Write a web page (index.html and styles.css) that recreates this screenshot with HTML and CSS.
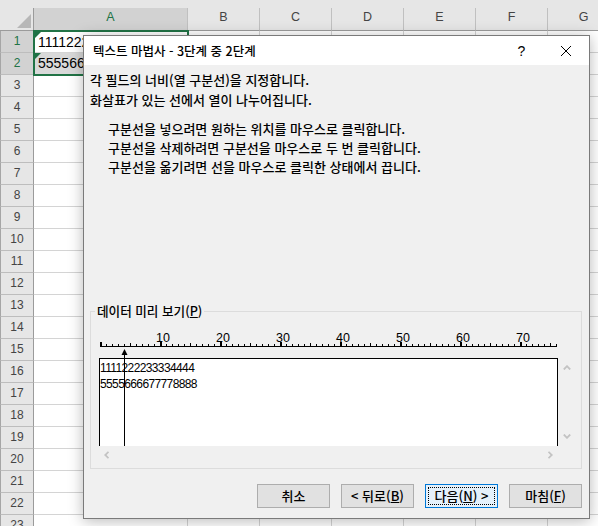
FILE: index.html
```html
<!DOCTYPE html>
<html lang="ko">
<head>
<meta charset="utf-8">
<title>텍스트 마법사</title>
<link rel="stylesheet" href="styles.css">
</head>
<body>
<div class="sheet">
  <div class="topstrip"></div>
  <div class="sheet-grid">
    <div class="corner"><span class="corner-tri"></span></div>
    <div class="colheads">
      <div class="colhead colhead-a selected">A</div>
      <div class="colhead">B</div>
      <div class="colhead">C</div>
      <div class="colhead">D</div>
      <div class="colhead">E</div>
      <div class="colhead">F</div>
      <div class="colhead">G</div>
    </div>
    <div class="rowheads">
      <div class="rowhead selected">1</div>
      <div class="rowhead selected">2</div>
      <div class="rowhead">3</div>
      <div class="rowhead">4</div>
      <div class="rowhead">5</div>
      <div class="rowhead">6</div>
      <div class="rowhead">7</div>
      <div class="rowhead">8</div>
      <div class="rowhead">9</div>
      <div class="rowhead">10</div>
      <div class="rowhead">11</div>
      <div class="rowhead">12</div>
      <div class="rowhead">13</div>
      <div class="rowhead">14</div>
      <div class="rowhead">15</div>
      <div class="rowhead">16</div>
      <div class="rowhead">17</div>
      <div class="rowhead">18</div>
      <div class="rowhead">19</div>
      <div class="rowhead">20</div>
      <div class="rowhead">21</div>
      <div class="rowhead">22</div>
      <div class="rowhead">23</div>
    </div>
    <div class="cells">
      <div class="col col-a">
        <div class="selection">
          <div class="cell cell-active"><span class="err"></span>1111222233334444</div>
          <div class="cell cell-range"><span class="err"></span>5555666677778888</div>
        </div>
      </div>
      <div class="col"></div>
      <div class="col"></div>
      <div class="col"></div>
      <div class="col"></div>
      <div class="col"></div>
      <div class="col"></div>
    </div>
  </div>
</div>

<div class="dialog">
  <div class="titlebar">
    <span class="title">텍스트 마법사 - 3단계 중 2단계</span>
    <span class="tb-btn tb-help">?</span>
    <span class="tb-btn tb-close">
      <svg width="10" height="10" viewBox="0 0 10 10"><path d="M0 0L10 10M10 0L0 10" stroke="#000" stroke-width="1" fill="none"/></svg>
    </span>
  </div>
  <div class="dlg-body">
    <p class="intro">각 필드의 너비(열 구분선)을 지정합니다.<br>화살표가 있는 선에서 열이 나누어집니다.</p>
    <p class="hints">구분선을 넣으려면 원하는 위치를 마우스로 클릭합니다.<br>구분선을 삭제하려면 구분선을 마우스로 두 번 클릭합니다.<br>구분선을 옮기려면 선을 마우스로 클릭한 상태에서 끕니다.</p>
    <fieldset class="preview-group">
      <legend>데이터 미리 보기(<u>P</u>)</legend>
      <svg class="ruler" width="476" height="28" viewBox="0 0 476 28">
        <defs>
          <pattern id="minor" x="1" y="0" width="6" height="28" patternUnits="userSpaceOnUse">
            <rect x="0" y="14" width="1" height="2" fill="#000"/>
          </pattern>
        </defs>
        <rect x="1" y="14" width="457" height="2" fill="url(#minor)"/>
        <rect x="1" y="16" width="457" height="1" fill="#000"/>
        <g fill="#000">
          <rect x="1" y="12" width="2" height="5"/>
          <rect x="61" y="12" width="2" height="5"/>
          <rect x="121" y="12" width="2" height="5"/>
          <rect x="181" y="12" width="2" height="5"/>
          <rect x="241" y="12" width="2" height="5"/>
          <rect x="301" y="12" width="2" height="5"/>
          <rect x="361" y="12" width="2" height="5"/>
          <rect x="421" y="12" width="2" height="5"/>
          <rect x="31" y="13" width="1" height="4"/>
          <rect x="91" y="13" width="1" height="4"/>
          <rect x="151" y="13" width="1" height="4"/>
          <rect x="211" y="13" width="1" height="4"/>
          <rect x="271" y="13" width="1" height="4"/>
          <rect x="331" y="13" width="1" height="4"/>
          <rect x="391" y="13" width="1" height="4"/>
          <rect x="451" y="13" width="1" height="4"/>
        </g>
        <g class="ruler-nums" font-family="Liberation Sans, Arial, sans-serif" font-size="12.5" fill="#000">
          <text x="57" y="12">10</text>
          <text x="117" y="12">20</text>
          <text x="177" y="12">30</text>
          <text x="237" y="12">40</text>
          <text x="297" y="12">50</text>
          <text x="357" y="12">60</text>
          <text x="417" y="12">70</text>
        </g>
        <polygon points="25.5,19 22.5,25 28.5,25" fill="#000"/>
        <rect x="25" y="24" width="1" height="4" fill="#000"/>
      </svg>
      <div class="pv-row">
        <div class="pv-box">
          <div class="pv-text">1111222233334444<br>5555666677778888</div>
          <span class="break-line"></span>
        </div>
        <div class="vscroll">
          <svg width="8" height="5" viewBox="0 0 8 5"><polyline points="0.8,4.5 4,1.2 7.2,4.5" fill="none" stroke="#c3c3c3" stroke-width="1.8"/></svg>
          <svg width="8" height="5" viewBox="0 0 8 5"><polyline points="0.8,0.5 4,3.8 7.2,0.5" fill="none" stroke="#c3c3c3" stroke-width="1.8"/></svg>
        </div>
      </div>
      <div class="hscroll">
        <svg width="5" height="8" viewBox="0 0 5 8"><polyline points="4.5,0.8 1.2,4 4.5,7.2" fill="none" stroke="#c3c3c3" stroke-width="1.8"/></svg>
        <svg width="5" height="8" viewBox="0 0 5 8"><polyline points="0.5,0.8 3.8,4 0.5,7.2" fill="none" stroke="#c3c3c3" stroke-width="1.8"/></svg>
      </div>
    </fieldset>
    <div class="buttons">
      <button class="btn" type="button">취소</button>
      <button class="btn" type="button">&lt; 뒤로(<u>B</u>)</button>
      <button class="btn btn-default" type="button">다음(<u>N</u>) &gt;</button>
      <button class="btn" type="button">마침(<u>F</u>)</button>
    </div>
  </div>
</div>
</body>
</html>
```
FILE: styles.css
```css
* { box-sizing: border-box; }
html, body { margin: 0; padding: 0; }
body {
  width: 598px;
  height: 526px;
  overflow: hidden;
  background: #fff;
  position: relative;
  font-family: "Liberation Sans", Arial, sans-serif;
}

/* ---------- spreadsheet ---------- */
.topstrip { height: 8px; background: #e6e6e6; }
.sheet-grid {
  display: grid;
  grid-template-columns: 34px 1fr;
  grid-template-rows: 23px auto;
}
.corner {
  background: #e6e6e6;
  border-right: 1px solid #9b9b9b;
  border-bottom: 1px solid #9b9b9b;
  display: flex;
  justify-content: flex-end;
  align-items: flex-end;
  padding: 0 2px 2px 0;
}
.corner-tri {
  width: 0;
  height: 0;
  border-left: 14px solid transparent;
  border-bottom: 14px solid #b7b7b7;
}
.colheads { display: flex; }
.colhead {
  flex: none;
  width: 72px;
  height: 23px;
  background: #e6e6e6;
  border-right: 1px solid #c0c0c0;
  border-bottom: 1px solid #9b9b9b;
  color: #444;
  font-size: 12.5px;
  line-height: 18px;
  text-align: center;
}
.colhead-a { width: 154px; }
.colhead.selected { background: #d2d2d2; color: #217346; }
.rowheads { display: flex; flex-direction: column; }
.rowhead {
  height: 22px;
  background: #e6e6e6;
  border-left: 1px solid #a6a6a6;
  border-right: 1px solid #9b9b9b;
  border-bottom: 1px solid #bdbdbd;
  color: #444;
  font-size: 12px;
  line-height: 21px;
  text-align: center;
}
.rowhead.selected { background: #d2d2d2; color: #217346; }
.cells {
  display: flex;
  background: repeating-linear-gradient(to bottom, #fff 0 21px, #d4d4d4 21px 22px);
}
.col { flex: none; width: 72px; border-right: 1px solid #d4d4d4; }
.col-a { width: 154px; }
.selection {
  position: relative;
  margin: -1px 0 0 -1px;
  width: 156px;
  height: 46px;
  border: 2px solid #217346;
}
.cell {
  position: relative;
  height: 21px;
  padding-left: 3px;
  font-size: 14px;
  color: #000;
  white-space: nowrap;
  overflow: hidden;
}
.cell-active { background: #fff; border-bottom: 1px solid #d4d4d4; line-height: 20px; }
.cell-range { background: #d9d9d9; line-height: 21px; }
.err {
  position: absolute;
  left: 0;
  top: 0;
  width: 0;
  height: 0;
  border-top: 6px solid #1e7145;
  border-right: 6px solid transparent;
}

/* ---------- dialog ---------- */
.dialog {
  position: absolute;
  left: 83px;
  top: 35px;
  width: 507px;
  height: 484px;
  border: 1px solid #7a7a7a;
  background: #f0f0f0;
  box-shadow: 0 2px 14px rgba(0, 0, 0, 0.28);
  display: flex;
  flex-direction: column;
  font-family: "Noto Sans CJK KR", "Noto Sans", sans-serif;
  font-size: 13px;
  font-weight: 500;
  color: #000;
}
.titlebar {
  flex: none;
  height: 29px;
  background: #fff;
  display: flex;
  align-items: center;
}
.title { flex: 1; padding-left: 9px; font-size: 12.5px; }
.tb-btn {
  width: 46px;
  height: 29px;
  display: flex;
  align-items: center;
  justify-content: center;
}
.tb-help { font-family: "Liberation Sans", Arial, sans-serif; font-size: 14px; padding-left: 3px; }
.dlg-body {
  flex: 1;
  display: flex;
  flex-direction: column;
  padding: 5px 7px 10px 6px;
}
.intro { margin: 0; line-height: 20px; }
.hints { margin: 9px 0 0 18px; line-height: 19px; }
.preview-group {
  margin: 127px 0 0 0;
  border: 1px solid #dcdcdc;
  padding: 0 0 4px 0;
  min-width: 0;
}
.preview-group legend {
  margin-left: 4px;
  padding: 0 2px;
  line-height: 16px;
  font-size: 12.6px;
}
.ruler { display: block; margin: 11px 0 0 8px; }
.pv-row { display: flex; margin-left: 8px; }
.pv-box {
  position: relative;
  width: 459px;
  height: 88px;
  background: #fff;
  border: 1px solid #000;
  border-bottom: none;
  padding-top: 1px;
}
.pv-text {
  font-family: "Liberation Sans", Arial, sans-serif;
  font-weight: 400;
  font-size: 12px;
  letter-spacing: -0.62px;
  line-height: 16px;
  white-space: nowrap;
}
.break-line {
  position: absolute;
  left: 24px;
  top: 0;
  bottom: 0;
  width: 1px;
  background: #000;
}
.vscroll {
  width: 18px;
  height: 88px;
  display: flex;
  flex-direction: column;
  justify-content: space-between;
  align-items: center;
  padding: 7px 0;
}
.vscroll svg, .hscroll svg { display: block; }
.hscroll {
  width: 459px;
  height: 18px;
  margin-left: 8px;
  display: flex;
  justify-content: space-between;
  align-items: center;
  padding: 0 5px;
}
.buttons {
  display: flex;
  justify-content: flex-end;
  gap: 11px;
  margin-top: 15px;
}
.btn {
  width: 73px;
  height: 24px;
  padding: 0;
  margin: 0;
  background: #e1e1e1;
  border: 1px solid #adadad;
  font-family: inherit;
  font-weight: inherit;
  font-size: 13px;
  color: #000;
  line-height: 22px;
}
.btn-default {
  background: #e5f1fb;
  border-color: #0078d7;
  outline: 1px dotted #000;
  outline-offset: -4px;
}
```
